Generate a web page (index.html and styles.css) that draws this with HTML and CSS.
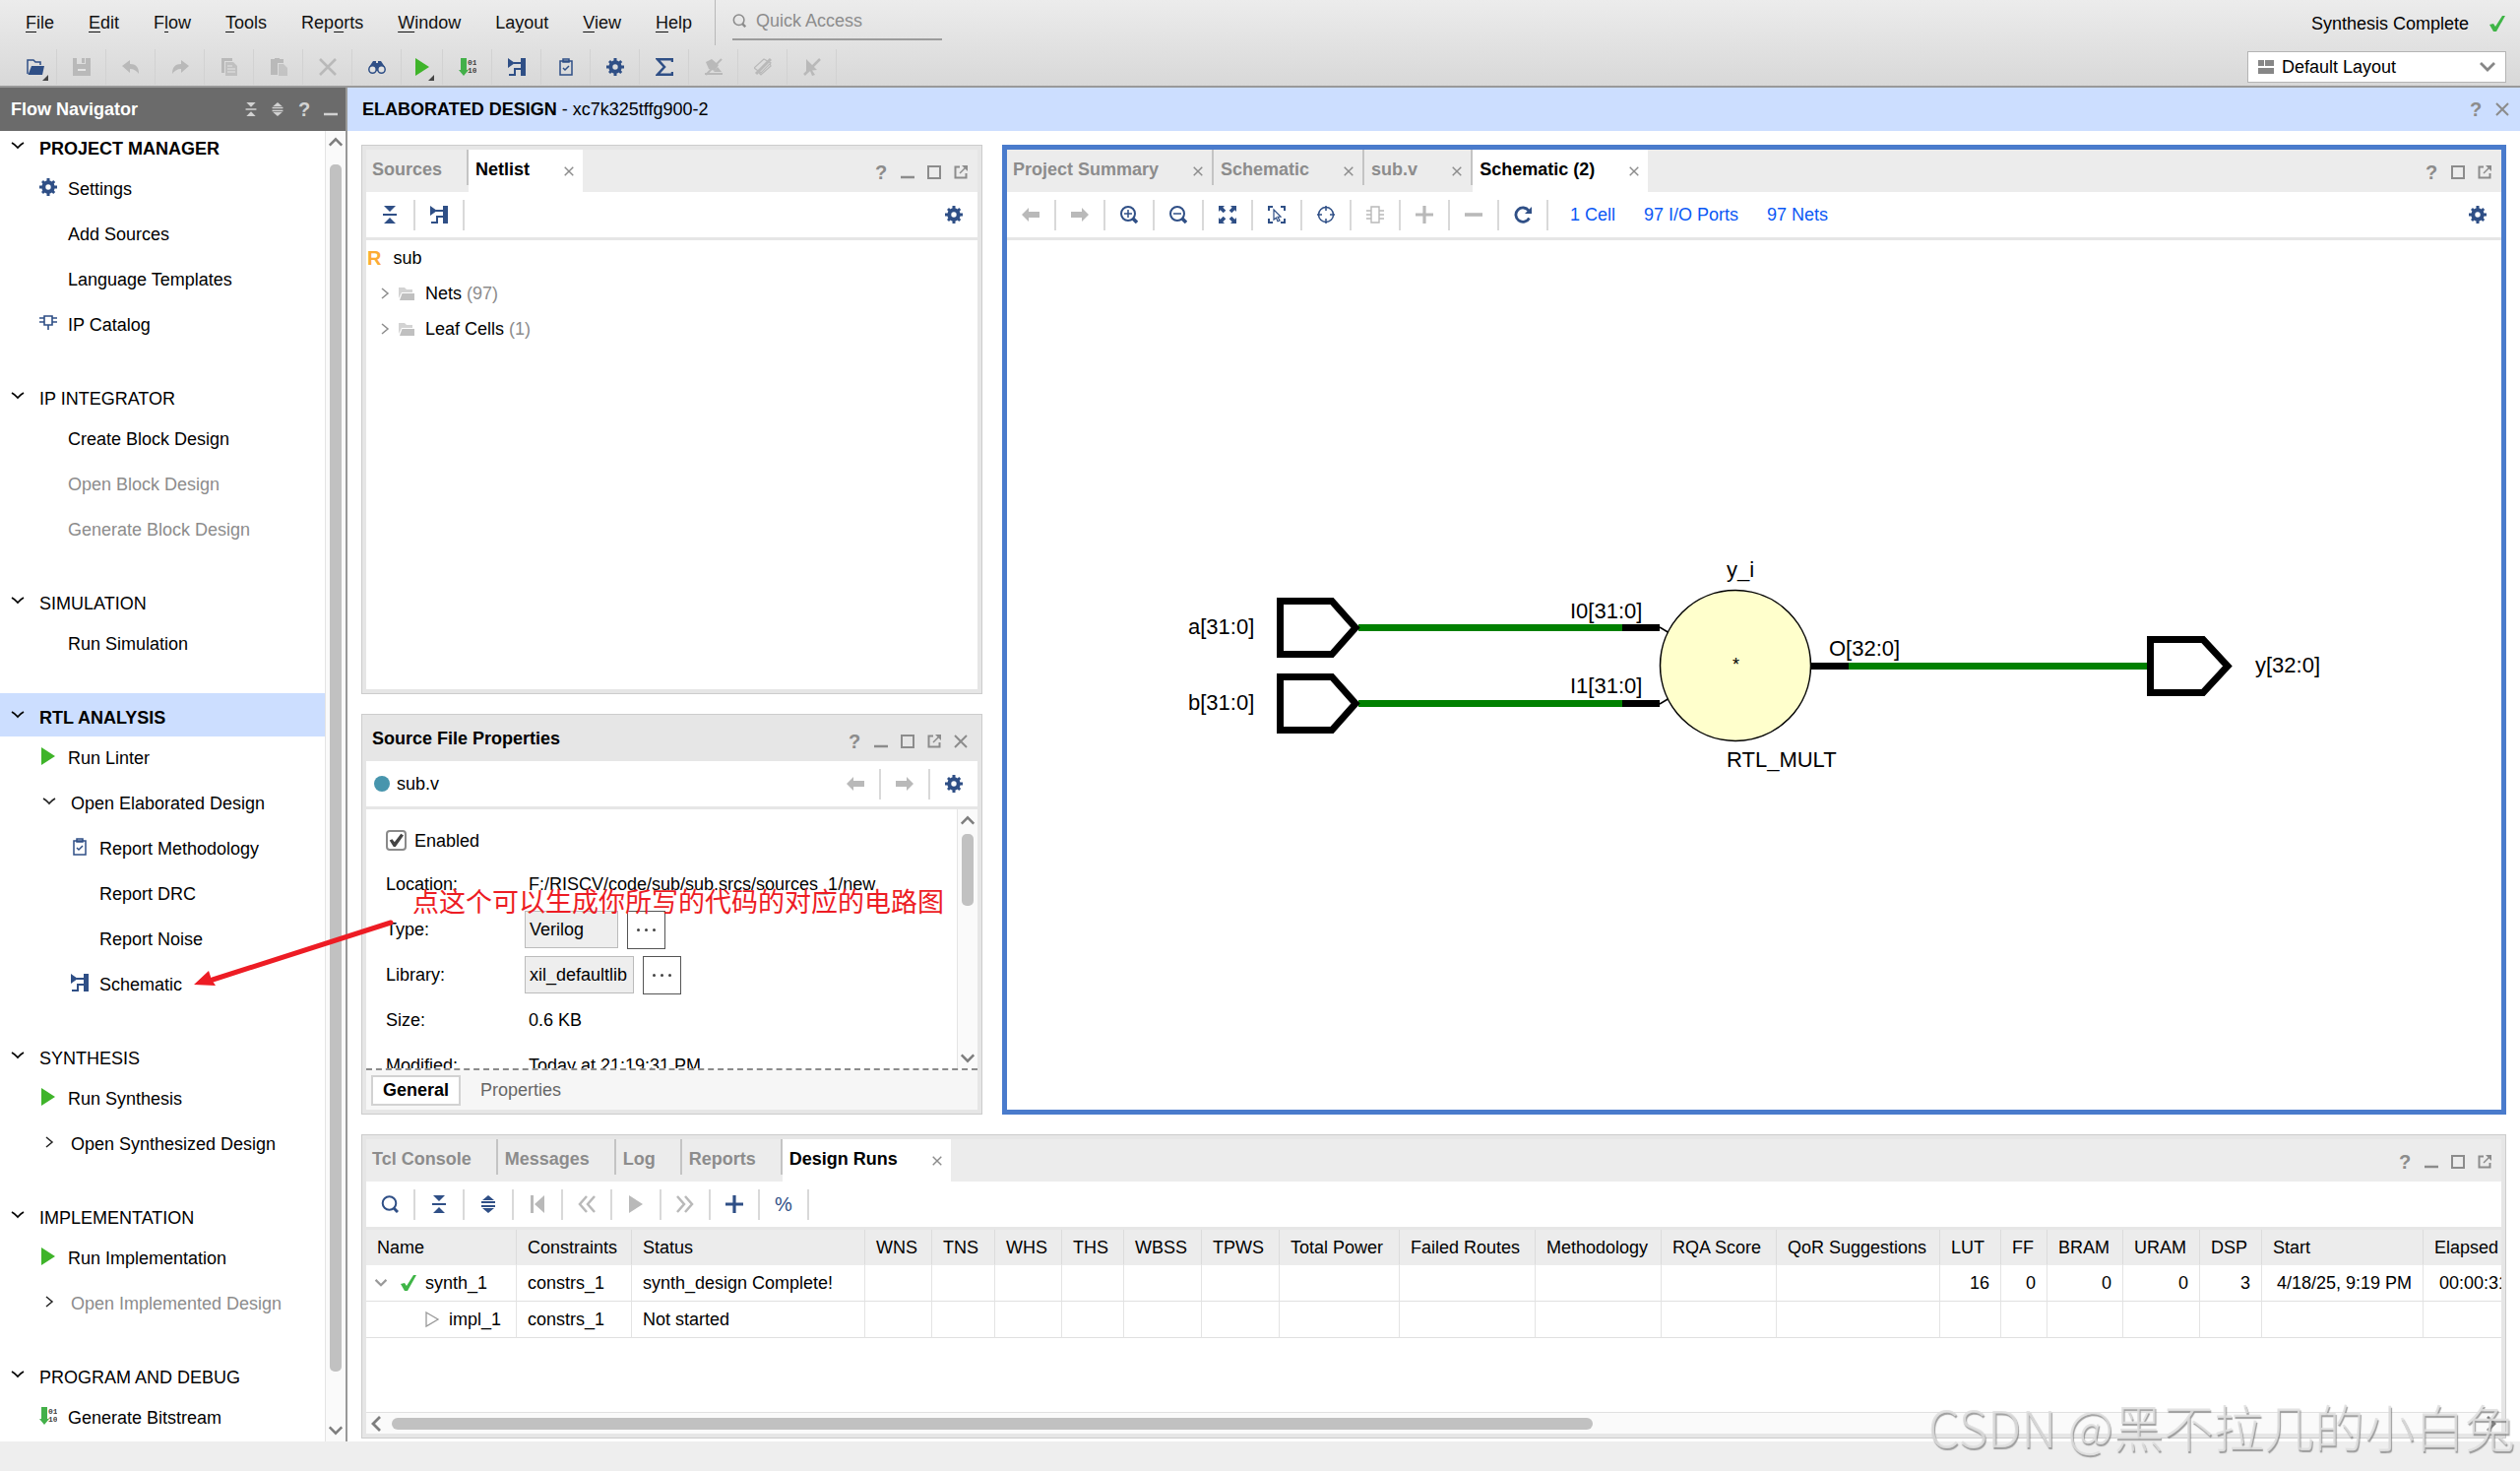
FILE: index.html
```html
<!DOCTYPE html>
<html lang="en">
<head>
<meta charset="utf-8">
<meta name="viewport" content="width=device-width, initial-scale=1">
<title>Elaborated Design</title>
<link rel="stylesheet" href="styles.css">
</head>
<body>

<svg class="sprite" aria-hidden="true">
  <symbol id="open" viewBox="0 0 18 18"><path d="M1 16V2h6l2 2h5v3" fill="none" stroke="currentColor" stroke-width="1.5"/><path d="M5 8h13l-2 9H1.500z" fill="currentColor"/></symbol>
  <symbol id="save" viewBox="0 0 18 18"><path d="M0 0h4v6h9V0h5v18H0z" fill="currentColor"/><path d="M9 0h3v5H9z" fill="currentColor"/><path d="M5 11h8v2H5z" fill="#e4e4e4"/></symbol>
  <symbol id="undo" viewBox="0 0 18 18"><path d="M0 8l8-6v4c6 0 9 3 9 10-2-3-5-5-9-5v4z" fill="currentColor"/></symbol>
  <symbol id="redo" viewBox="0 0 18 18"><path d="M18 8l-8-6v4C4 6 1 9 1 16c2-3 5-5 9-5v4z" fill="currentColor"/></symbol>
  <symbol id="copy" viewBox="0 0 18 18"><path d="M1 0h11v3H4v12H1z" fill="currentColor"/><path d="M5 4h8l4 4v10H5z" fill="currentColor" opacity=".8"/><path d="M7 8h5M7 11h8M7 14h8" stroke="#e4e4e4"/></symbol>
  <symbol id="paste" viewBox="0 0 18 18"><path d="M1 1h4V0h5v1h4v4H8v12H1z" fill="currentColor"/><path d="M9 6h5l4 4v8H9z" fill="currentColor" opacity=".7"/></symbol>
  <symbol id="delete" viewBox="0 0 18 18"><path d="M1 1l16 16M17 1L1 17" stroke="currentColor" stroke-width="2.600"/></symbol>
  <symbol id="find" viewBox="0 0 18 18"><path d="M1 9l4-6h3v2h2V3h3l4 6-4 4H5z" fill="currentColor"/><circle cx="4.500" cy="11.500" r="3.700" fill="#e2e2e2" stroke="currentColor" stroke-width="1.500"/><circle cx="13.500" cy="11.500" r="3.700" fill="#e2e2e2" stroke="currentColor" stroke-width="1.500"/></symbol>
  <symbol id="play" viewBox="0 0 18 18"><path d="M2 0l14 9-14 9z" fill="currentColor"/></symbol>
  <symbol id="run" viewBox="0 0 18 18"><path d="M2 0l14 9-14 9z" fill="currentColor"/></symbol>
  <symbol id="bits" viewBox="0 0 18 18"><path d="M2 0h6v12h2l-5 6-5-6h2z" fill="#43b049"/><text x="9" y="7" font-size="8" font-family="Liberation Mono, monospace" font-weight="700" fill="#444">01</text><text x="9" y="15" font-size="8" font-family="Liberation Mono, monospace" font-weight="700" fill="#444">10</text></symbol>
  <symbol id="schematic" viewBox="0 0 18 18"><path d="M0 0l7 5-7 5zM13 0h5v18h-5z" fill="currentColor"/><path d="M6 5h8M1 17h6v-6h7" fill="none" stroke="currentColor" stroke-width="2"/></symbol>
  <symbol id="report" viewBox="0 0 18 18"><path d="M3 3h12v14H3zM6 1h6v3H6z" fill="none" stroke="currentColor" stroke-width="1.500"/><path d="M6 10l2 2 4-4" fill="none" stroke="currentColor" stroke-width="1.500"/></symbol>
  <symbol id="gear" viewBox="0 0 18 18"><path d="M7.500 0h3v3h-3zM7.500 15h3v3h-3zM0 7.500h3v3H0zM15 7.500h3v3h-3zM2 4l2-2 2.200 2.200-2 2zM12 4.200L14.200 2l2 2L14 6.200zM2 14l2.200-2.200 2 2L4 16zM12 13.800l2-2 2.200 2.200-2 2z" fill="currentColor"/><circle cx="9" cy="9" r="4.700" fill="none" stroke="currentColor" stroke-width="4"/></symbol>
  <symbol id="sum" viewBox="0 0 18 18"><path d="M17 4V1.300H2L9 9l-7 7.700h15V14" fill="none" stroke="currentColor" stroke-width="2.500"/></symbol>
  <symbol id="mark" viewBox="0 0 18 18"><path d="M1 4l6-3 7 6-4 6-6-2zM0 15h18v2H0z" fill="currentColor"/><path d="M17 1L1 17" stroke="currentColor" stroke-width="2"/><path d="M13 9l4 5h-8z" fill="currentColor"/></symbol>
  <symbol id="nohigh" viewBox="0 0 18 18"><path d="M0 10l10-9 7 4-10 10zM5 15l2 2 10-9-1-3" fill="none" stroke="currentColor" stroke-width="1.200"/><path d="M17 1L2 16" stroke="currentColor" stroke-width="3"/></symbol>
  <symbol id="nosel" viewBox="0 0 18 18"><path d="M3 1l11 11-5 .500 3 4.500-3 1-2-5-4 3z" fill="currentColor"/><path d="M17 1L1 17" stroke="currentColor" stroke-width="2.500"/></symbol>
  <symbol id="collapse" viewBox="0 0 18 18"><path d="M3 0h12L9 6zM3 18h12l-6-6zM2 8h14v2H2z" fill="currentColor"/></symbol>
  <symbol id="expand" viewBox="0 0 18 18"><path d="M9 0l6 5H3zM9 18l6-5H3zM2 6h14v2H2zM2 10h14v2H2z" fill="currentColor"/></symbol>
  <symbol id="ip" viewBox="0 0 18 18"><path d="M5 2h8v9H5zM0 4h5M0 8h5M13 4h5M13 8h5M9 11v5" fill="none" stroke="currentColor" stroke-width="1.600"/></symbol>
  <symbol id="folder" viewBox="0 0 18 18"><path d="M1 14V3h6l2 2h6v3H4z" fill="currentColor" opacity=".7"/><path d="M4.500 9H17v7H2z" fill="currentColor"/></symbol>
  <symbol id="down" viewBox="0 0 18 18"><path d="M3 6q3 1.500 6 5 3-3.500 6-5" fill="none" stroke="currentColor" stroke-width="1.800"/></symbol>
  <symbol id="bigdown" viewBox="0 0 18 18"><path d="M2 5l7 7 7-7" fill="none" stroke="currentColor" stroke-width="2.800"/></symbol>
  <symbol id="right" viewBox="0 0 18 18"><path d="M6 4l6 5-6 5" fill="none" stroke="currentColor" stroke-width="1.500"/></symbol>
  <symbol id="arrowl" viewBox="0 0 18 18"><path d="M0 9l7-7v4h11v6H7v4z" fill="currentColor"/></symbol>
  <symbol id="arrowr" viewBox="0 0 18 18"><path d="M18 9l-7-7v4H0v6h11v4z" fill="currentColor"/></symbol>
  <symbol id="zoomin" viewBox="0 0 18 18"><circle cx="8" cy="8" r="7" fill="none" stroke="currentColor" stroke-width="2"/><path d="M8 4v8M4 8h8" stroke="currentColor" stroke-width="1.500"/><path d="M13 13l4 4" stroke="currentColor" stroke-width="3.500"/></symbol>
  <symbol id="zoomout" viewBox="0 0 18 18"><circle cx="8" cy="8" r="7" fill="none" stroke="currentColor" stroke-width="2"/><path d="M4 8h8" stroke="currentColor" stroke-width="1.500"/><path d="M13 13l4 4" stroke="currentColor" stroke-width="3.500"/></symbol>
  <symbol id="search" viewBox="0 0 18 18"><circle cx="8.500" cy="8" r="6.800" fill="none" stroke="currentColor" stroke-width="2"/><path d="M13 13l4 4" stroke="currentColor" stroke-width="3"/></symbol>
  <symbol id="fit" viewBox="0 0 18 18"><path d="M0 0h6L4.300 1.700l3 3-2.600 2.600-3-3L0 6zM18 0v6l-1.700-1.700-3 3-2.600-2.600 3-3L12 0zM0 18v-6l1.700 1.700 3-3 2.600 2.600-3 3L6 18zM18 18h-6l1.700-1.700-3-3 2.600-2.600 3 3L18 12z" fill="currentColor"/></symbol>
  <symbol id="selarea" viewBox="0 0 18 18"><path d="M1 5V1h4M13 1h4v4M17 13v4h-4M5 17H1v-4" fill="none" stroke="currentColor" stroke-width="2"/><path d="M6 4l7 7-3 .300 2 3.700-2 .700-1.500-3.500L6 14z" fill="none" stroke="currentColor" stroke-width="1.200"/></symbol>
  <symbol id="target" viewBox="0 0 18 18"><circle cx="9" cy="9" r="7.500" fill="none" stroke="currentColor" stroke-width="1.500"/><path d="M9 0v5M9 13v5M0 9h5M13 9h5" stroke="currentColor" stroke-width="1.500"/></symbol>
  <symbol id="cell" viewBox="0 0 18 18"><path d="M5 1h8v16H5zM0 5h5M0 9h5M0 13h5M13 5h5M13 9h5M13 13h5" fill="none" stroke="currentColor" stroke-width="1.400"/></symbol>
  <symbol id="plus" viewBox="0 0 18 18"><path d="M9 0v18M0 9h18" stroke="currentColor" stroke-width="3.200"/></symbol>
  <symbol id="minus" viewBox="0 0 18 18"><path d="M0 9h18" stroke="currentColor" stroke-width="3.600"/></symbol>
  <symbol id="reload" viewBox="0 0 18 18"><path d="M15 5A7.200 7.200 0 1 0 15.500 12.500" fill="none" stroke="currentColor" stroke-width="2.800"/><path d="M18 1v7h-7z" fill="currentColor"/></symbol>
  <symbol id="first" viewBox="0 0 18 18"><path d="M2 0h3v18H2zM16 0v18L6 9z" fill="currentColor"/></symbol>
  <symbol id="rewind" viewBox="0 0 18 18"><path d="M9 1L2 9l7 8M17 1l-7 8 7 8" fill="none" stroke="currentColor" stroke-width="2.500"/></symbol>
  <symbol id="forward" viewBox="0 0 18 18"><path d="M1 1l7 8-7 8M9 1l7 8-7 8" fill="none" stroke="currentColor" stroke-width="2.500"/></symbol>
  <symbol id="check" viewBox="0 0 18 18"><path d="M1 10l4-1 2 3 7-11h3L8 17H5z" fill="#3fb547"/></symbol>
  <symbol id="tri" viewBox="0 0 18 18"><path d="M3 2l12 7-12 7z" fill="none" stroke="currentColor" stroke-width="1.300"/></symbol>
  <symbol id="layout" viewBox="0 0 18 18"><path d="M1 2h6v6H1zM8 2h9v6H8zM1 10h16v6H1z" fill="currentColor"/></symbol>
  <symbol id="min" viewBox="0 0 14 14"><path d="M0 12h14" stroke="currentColor" stroke-width="2.500"/></symbol>
  <symbol id="max" viewBox="0 0 14 14"><path d="M1 1h12v12H1z" fill="none" stroke="currentColor" stroke-width="2"/></symbol>
  <symbol id="float" viewBox="0 0 14 14"><path d="M6 1.500H1.500v11h11V8" fill="none" stroke="currentColor" stroke-width="2"/><path d="M6 8l6-6" stroke="currentColor" stroke-width="1.500"/><path d="M8 0h6v6z" fill="currentColor"/></symbol>
  <symbol id="close" viewBox="0 0 14 14"><path d="M1 1l12 12M13 1L1 13" stroke="currentColor" stroke-width="2"/></symbol>
</svg>

<div class="app">
  <header class="topbar">
    <div class="top-left">
      <div class="menu-row">
        <nav class="menu">
          <button><u>F</u>ile</button><button><u>E</u>dit</button><button>F<u>l</u>ow</button><button><u>T</u>ools</button><button>Rep<u>o</u>rts</button><button><u>W</u>indow</button><button>La<u>y</u>out</button><button><u>V</u>iew</button><button><u>H</u>elp</button>
        </nav>
        <label class="quick"><svg class="i14"><use href="#search"/></svg><input type="text" placeholder="Quick Access" aria-label="Quick Access"></label>
      </div>
      <div class="main-tools">
        <button class="mt has-more" aria-label="Open"><svg class="i18"><use href="#open"/></svg></button>
        <button class="mt off" aria-label="Save"><svg class="i18"><use href="#save"/></svg></button>
        <button class="mt off" aria-label="Undo"><svg class="i18"><use href="#undo"/></svg></button>
        <button class="mt off" aria-label="Redo"><svg class="i18"><use href="#redo"/></svg></button>
        <button class="mt off" aria-label="Copy"><svg class="i18"><use href="#copy"/></svg></button>
        <button class="mt off" aria-label="Paste"><svg class="i18"><use href="#paste"/></svg></button>
        <button class="mt off" aria-label="Delete"><svg class="i18"><use href="#delete"/></svg></button>
        <button class="mt" aria-label="Find"><svg class="i18"><use href="#find"/></svg></button>
        <button class="mt narrow green has-more" aria-label="Run"><svg class="i18"><use href="#play"/></svg></button>
        <button class="mt" aria-label="Generate Bitstream"><svg class="i18"><use href="#bits"/></svg></button>
        <button class="mt" aria-label="Schematic"><svg class="i18"><use href="#schematic"/></svg></button>
        <button class="mt" aria-label="Report"><svg class="i18"><use href="#report"/></svg></button>
        <button class="mt" aria-label="Settings"><svg class="i18"><use href="#gear"/></svg></button>
        <button class="mt" aria-label="Sum"><svg class="i18"><use href="#sum"/></svg></button>
        <button class="mt off" aria-label="Unmark"><svg class="i18"><use href="#mark"/></svg></button>
        <button class="mt off" aria-label="Unhighlight"><svg class="i18"><use href="#nohigh"/></svg></button>
        <button class="mt off" aria-label="Unselect"><svg class="i18"><use href="#nosel"/></svg></button>
      </div>
    </div>
    <div class="top-right">
      <div class="status">Synthesis Complete <svg class="i18"><use href="#check"/></svg></div>
      <label class="layout-pick"><svg class="i18"><use href="#layout"/></svg><select aria-label="Layout"><option>Default Layout</option></select><svg class="i18"><use href="#bigdown"/></svg></label>
    </div>
  </header>

  <div class="body">
    <aside class="nav">
      <div class="nav-head"><h2>Flow Navigator</h2>
        <button aria-label="Collapse all"><svg class="i14"><use href="#collapse"/></svg></button><button aria-label="Expand all"><svg class="i14"><use href="#expand"/></svg></button><button class="help">?</button><button aria-label="Minimize"><svg class="i14"><use href="#min"/></svg></button>
      </div>
      <div class="nav-body">
        <div class="nav-list">
          <section>
            <button class="sec first strong"><svg class="i18"><use href="#down"/></svg>PROJECT MANAGER</button>
            <button class="item"><svg class="i18"><use href="#gear"/></svg>Settings</button>
            <button class="item noicon">Add Sources</button>
            <button class="item noicon">Language Templates</button>
            <button class="item"><svg class="i18"><use href="#ip"/></svg>IP Catalog</button>
          </section>
          <section>
            <button class="sec"><svg class="i18"><use href="#down"/></svg>IP INTEGRATOR</button>
            <button class="item noicon">Create Block Design</button>
            <button class="item noicon dim">Open Block Design</button>
            <button class="item noicon dim">Generate Block Design</button>
          </section>
          <section>
            <button class="sec"><svg class="i18"><use href="#down"/></svg>SIMULATION</button>
            <button class="item noicon">Run Simulation</button>
          </section>
          <section>
            <button class="sec strong current"><svg class="i18"><use href="#down"/></svg>RTL ANALYSIS</button>
            <button class="item"><svg class="i18 green"><use href="#run"/></svg>Run Linter</button>
            <button class="item tree"><svg class="i18"><use href="#down"/></svg>Open Elaborated Design</button>
            <button class="item sub"><svg class="i18"><use href="#report"/></svg>Report Methodology</button>
            <button class="item sub noicon">Report DRC</button>
            <button class="item sub noicon">Report Noise</button>
            <button class="item sub"><svg class="i18"><use href="#schematic"/></svg>Schematic</button>
          </section>
          <section>
            <button class="sec"><svg class="i18"><use href="#down"/></svg>SYNTHESIS</button>
            <button class="item"><svg class="i18 green"><use href="#run"/></svg>Run Synthesis</button>
            <button class="item tree"><svg class="i18"><use href="#right"/></svg>Open Synthesized Design</button>
          </section>
          <section>
            <button class="sec"><svg class="i18"><use href="#down"/></svg>IMPLEMENTATION</button>
            <button class="item"><svg class="i18 green"><use href="#run"/></svg>Run Implementation</button>
            <button class="item tree dim"><svg class="i18"><use href="#right"/></svg>Open Implemented Design</button>
          </section>
          <section>
            <button class="sec"><svg class="i18"><use href="#down"/></svg>PROGRAM AND DEBUG</button>
            <button class="item"><svg class="i18"><use href="#bits"/></svg>Generate Bitstream</button>
          </section>
        </div>
        <div class="vbar"><svg class="i18 flip"><use href="#bigdown"/></svg><div class="vtrack"><div class="vthumb nav-thumb"></div></div><svg class="i18"><use href="#bigdown"/></svg></div>
      </div>
    </aside>

    <main class="main">
      <div class="title"><h1>ELABORATED DESIGN <span>- xc7k325tffg900-2</span></h1><button class="help">?</button><button aria-label="Close"><svg class="i14"><use href="#close"/></svg></button></div>

      <div class="work">
        <div class="upper">
          <div class="left">
            <section class="panel netlist">
              <div class="tabbar">
                <button class="tab">Sources</button>
                <button class="tab active">Netlist<svg class="x"><use href="#close"/></svg></button>
                <div class="win"><button class="help">?</button><button aria-label="Minimize"><svg class="i14"><use href="#min"/></svg></button><button aria-label="Maximize"><svg class="i14"><use href="#max"/></svg></button><button aria-label="Float"><svg class="i14"><use href="#float"/></svg></button></div>
              </div>
              <div class="tools"><button class="t" aria-label="Collapse all"><svg class="i18"><use href="#collapse"/></svg></button><button class="t" aria-label="Schematic"><svg class="i18"><use href="#schematic"/></svg></button><button class="t end" aria-label="Settings"><svg class="i18"><use href="#gear"/></svg></button></div>
              <ul class="netlist-tree">
                <li class="root"><b>R</b>sub</li>
                <li><svg class="i18"><use href="#right"/></svg><svg class="i18 fold"><use href="#folder"/></svg>Nets <span>(97)</span></li>
                <li><svg class="i18"><use href="#right"/></svg><svg class="i18 fold"><use href="#folder"/></svg>Leaf Cells <span>(1)</span></li>
              </ul>
            </section>

            <section class="panel props">
              <div class="prop-head"><h2>Source File Properties</h2>
                <div class="win"><button class="help">?</button><button aria-label="Minimize"><svg class="i14"><use href="#min"/></svg></button><button aria-label="Maximize"><svg class="i14"><use href="#max"/></svg></button><button aria-label="Float"><svg class="i14"><use href="#float"/></svg></button><button aria-label="Close"><svg class="i14"><use href="#close"/></svg></button></div>
              </div>
              <div class="tools file"><span class="dot"></span><span class="name">sub.v</span><button class="t off" aria-label="Back"><svg class="i18"><use href="#arrowl"/></svg></button><button class="t off" aria-label="Forward"><svg class="i18"><use href="#arrowr"/></svg></button><button class="t end" aria-label="Settings"><svg class="i18"><use href="#gear"/></svg></button></div>
              <div class="prop-body">
                <form class="form">
                  <label class="enabled"><input type="checkbox" checked>Enabled</label>
                  <dl>
                    <dt>Location:</dt><dd>F:/RISCV/code/sub/sub.srcs/sources_1/new</dd>
                    <dt>Type:</dt><dd><span class="value type">Verilog</span><button type="button" class="more" aria-label="Change type"><i></i><i></i><i></i></button></dd>
                    <dt>Library:</dt><dd><span class="value">xil_defaultlib</span><button type="button" class="more" aria-label="Change library"><i></i><i></i><i></i></button></dd>
                    <dt>Size:</dt><dd>0.6 KB</dd>
                    <dt>Modified:</dt><dd>Today at 21:19:31 PM</dd>
                  </dl>
                </form>
                <div class="vbar"><svg class="i18 flip"><use href="#bigdown"/></svg><div class="vtrack"><div class="vthumb prop-thumb"></div></div><svg class="i18"><use href="#bigdown"/></svg></div>
              </div>
              <div class="prop-tabs"><button class="active">General</button><button>Properties</button></div>
            </section>
          </div>

          <section class="panel focus">
            <div class="tabbar">
              <button class="tab closable">Project Summary<svg class="x"><use href="#close"/></svg></button>
              <button class="tab closable">Schematic<svg class="x"><use href="#close"/></svg></button>
              <button class="tab closable">sub.v<svg class="x"><use href="#close"/></svg></button>
              <button class="tab active">Schematic (2)<svg class="x"><use href="#close"/></svg></button>
              <div class="win"><button class="help">?</button><button aria-label="Maximize"><svg class="i14"><use href="#max"/></svg></button><button aria-label="Float"><svg class="i14"><use href="#float"/></svg></button></div>
            </div>
            <div class="tools">
              <button class="t off" aria-label="Back"><svg class="i18"><use href="#arrowl"/></svg></button>
              <button class="t off" aria-label="Forward"><svg class="i18"><use href="#arrowr"/></svg></button>
              <button class="t" aria-label="Zoom in"><svg class="i18"><use href="#zoomin"/></svg></button>
              <button class="t" aria-label="Zoom out"><svg class="i18"><use href="#zoomout"/></svg></button>
              <button class="t" aria-label="Zoom fit"><svg class="i18"><use href="#fit"/></svg></button>
              <button class="t" aria-label="Select area"><svg class="i18"><use href="#selarea"/></svg></button>
              <button class="t" aria-label="Autofit selection"><svg class="i18"><use href="#target"/></svg></button>
              <button class="t off" aria-label="Cell"><svg class="i18"><use href="#cell"/></svg></button>
              <button class="t off" aria-label="Add"><svg class="i18"><use href="#plus"/></svg></button>
              <button class="t off" aria-label="Remove"><svg class="i18"><use href="#minus"/></svg></button>
              <button class="t" aria-label="Regenerate"><svg class="i18"><use href="#reload"/></svg></button>
              <div class="links"><a href="#cell">1 Cell</a><a href="#ports">97 I/O Ports</a><a href="#nets">97 Nets</a></div>
              <button class="t end" aria-label="Settings"><svg class="i18"><use href="#gear"/></svg></button>
            </div>
            <div class="canvas">
              <svg class="diagram" viewBox="1182 556 1200 240" role="img" aria-label="Schematic of sub">
                <g fill="none" stroke="#008000" stroke-width="7"><path d="M1380 637.500h268M1380 714.500h268M1878 676.500h306"/></g>
                <g fill="none" stroke="#000" stroke-width="7"><path d="M1648 637.500h38M1648 714.500h38M1840 676.500h38"/>
                  <path d="M1300.500 610.500H1353L1377 637.500 1353 664.500H1300.500z"/>
                  <path d="M1300.500 687.500H1353L1377 714.500 1353 741.500H1300.500z"/>
                  <path d="M2184.500 649.500H2238L2263 676.500 2238 703.500H2184.500z"/></g>
                <path d="M1686 637l10 6M1686 715l10-6" stroke="#000" stroke-width="1.500"/>
                <circle cx="1763" cy="676" r="76.500" fill="#ffffcc" stroke="#000" stroke-width="1.500"/>
                <g class="net-labels">
                  <text x="1207" y="644">a[31:0]</text><text x="1207" y="721">b[31:0]</text>
                  <text x="1595" y="628">I0[31:0]</text><text x="1595" y="704">I1[31:0]</text>
                  <text x="1754" y="586">y_i</text><text x="1754" y="779">RTL_MULT</text>
                  <text x="1858" y="666">O[32:0]</text><text x="2291" y="683">y[32:0]</text>
                  <text class="op" x="1760" y="681">*</text>
                </g>
              </svg>
            </div>
          </section>
        </div>

        <section class="panel runs">
          <div class="tabbar">
            <button class="tab">Tcl Console</button><button class="tab">Messages</button><button class="tab">Log</button><button class="tab">Reports</button>
            <button class="tab active">Design Runs<svg class="x"><use href="#close"/></svg></button>
            <div class="win"><button class="help">?</button><button aria-label="Minimize"><svg class="i14"><use href="#min"/></svg></button><button aria-label="Maximize"><svg class="i14"><use href="#max"/></svg></button><button aria-label="Float"><svg class="i14"><use href="#float"/></svg></button></div>
          </div>
          <div class="tools">
            <button class="t" aria-label="Search"><svg class="i18"><use href="#search"/></svg></button>
            <button class="t" aria-label="Collapse all"><svg class="i18"><use href="#collapse"/></svg></button>
            <button class="t" aria-label="Expand all"><svg class="i18"><use href="#expand"/></svg></button>
            <button class="t off" aria-label="First"><svg class="i18"><use href="#first"/></svg></button>
            <button class="t off" aria-label="Previous"><svg class="i18"><use href="#rewind"/></svg></button>
            <button class="t off" aria-label="Launch"><svg class="i18"><use href="#play"/></svg></button>
            <button class="t off" aria-label="Next"><svg class="i18"><use href="#forward"/></svg></button>
            <button class="t" aria-label="Create run"><svg class="i18"><use href="#plus"/></svg></button>
            <button class="t pct">%</button>
          </div>
          <div class="table-wrap">
            <table>
              <colgroup><col style="width:153px"><col style="width:117px"><col style="width:237px"><col style="width:68px"><col style="width:64px"><col style="width:68px"><col style="width:63px"><col style="width:79px"><col style="width:79px"><col style="width:122px"><col style="width:138px"><col style="width:128px"><col style="width:117px"><col style="width:166px"><col style="width:62px"><col style="width:47px"><col style="width:77px"><col style="width:78px"><col style="width:63px"><col style="width:164px"><col style="width:98px"></colgroup>
              <thead><tr><th>Name</th><th>Constraints</th><th>Status</th><th>WNS</th><th>TNS</th><th>WHS</th><th>THS</th><th>WBSS</th><th>TPWS</th><th>Total Power</th><th>Failed Routes</th><th>Methodology</th><th>RQA Score</th><th>QoR Suggestions</th><th>LUT</th><th>FF</th><th>BRAM</th><th>URAM</th><th>DSP</th><th>Start</th><th>Elapsed</th></tr></thead>
              <tbody>
                <tr><td class="run"><div><svg class="i14"><use href="#bigdown"/></svg><svg class="i18"><use href="#check"/></svg>synth_1</div></td><td>constrs_1</td><td>synth_design Complete!</td><td></td><td></td><td></td><td></td><td></td><td></td><td></td><td></td><td></td><td></td><td></td><td class="num">16</td><td class="num">0</td><td class="num">0</td><td class="num">0</td><td class="num">3</td><td class="num">4/18/25, 9:19 PM</td><td class="num">00:00:31</td></tr>
                <tr><td class="run child"><div><svg class="i18"><use href="#tri"/></svg>impl_1</div></td><td>constrs_1</td><td>Not started</td><td></td><td></td><td></td><td></td><td></td><td></td><td></td><td></td><td></td><td></td><td></td><td></td><td></td><td></td><td></td><td></td><td></td><td></td></tr>
              </tbody>
            </table>
          </div>
          <div class="hbar"><svg class="i18 turn-left"><use href="#bigdown"/></svg><div class="htrack"><div class="hthumb"></div></div><svg class="i18 turn-right"><use href="#bigdown"/></svg></div>
        </section>
      </div>
    </main>
  </div>
  <footer class="foot"></footer>

  <svg class="note-arrow" viewBox="0 0 210 80" aria-hidden="true"><path d="M203 14L22 72" stroke="#ed1c24" stroke-width="5" stroke-linecap="round"/><path d="M3 77L18 63l3 9 4 6z" fill="#ed1c24"/></svg>
  <p class="note" lang="zh">点这个可以生成你所写的代码的对应的电路图</p>
  <p class="watermark" lang="zh">CSDN @黑不拉几的小白兔</p>
</div>
</body>
</html>
```
FILE: styles.css
```css
* { box-sizing: border-box; }

:root {
  --blue: #2f4f86;
  --grey: #8c8c8c;
  --off: #b9b9b9;
  --line: #e6e6e6;
  --sel: #ccdeff;
}

body {
  margin: 0;
  background: #fff;
  color: #000;
  font: 18px/22px "Liberation Sans", "Noto Sans CJK SC", sans-serif;
}

h1, h2, p, ul, dl, dd { margin: 0; padding: 0; font-size: 18px; line-height: 22px; }
ul { list-style: none; }
svg { display: block; flex: none; }
.sprite { position: absolute; width: 0; height: 0; }
.i18 { width: 18px; height: 18px; }
.i14 { width: 14px; height: 14px; }
.green { color: #3fb42a; }

button {
  display: flex;
  align-items: center;
  margin: 0;
  padding: 0;
  border: 0;
  border-radius: 0;
  background: none;
  color: inherit;
  font: inherit;
  white-space: nowrap;
  flex: none;
}

.help { width: 14px; justify-content: center; font-weight: 700; font-size: 20px; }

.app {
  position: relative;
  display: flex;
  flex-direction: column;
  height: 100vh;
  overflow: hidden;
}

/* Menu and main toolbar */
.topbar {
  display: flex;
  justify-content: space-between;
  background: linear-gradient(#ececec, #d8d8d8);
  border-bottom: 2px solid #999;
}
.menu-row { display: flex; height: 48px; }
.menu { display: flex; gap: 35px; padding: 0 23px 0 26px; border-right: 1px solid #b8b8b8; margin-bottom: 2px; color: #111; }
.menu button { display: block; }
.menu u { text-underline-offset: 3px; }
.quick {
  display: flex;
  align-items: center;
  gap: 10px;
  width: 213px;
  height: 35px;
  margin: 6px 0 0 17px;
  padding-bottom: 3px;
  border-bottom: 2px solid #9c9c9c;
  color: var(--grey);
}
.quick input { width: 170px; border: 0; padding: 0; background: none; font: inherit; }
.quick input::placeholder { color: var(--grey); opacity: 1; }
.main-tools { display: flex; height: 39px; padding-left: 14px; }
.mt { position: relative; width: 50px; height: 36px; margin-top: 2px; justify-content: center; color: var(--blue); border-right: 1px solid #d2d2d2; }
.mt:first-child { width: 44px; }
.mt.off { color: var(--off); }
.mt.narrow { width: 42px; }
.mt.green { color: #3fb42a; }
.has-more::after {
  content: "";
  position: absolute;
  right: 8px;
  bottom: 4px;
  border-left: 6px solid transparent;
  border-bottom: 6px solid #444;
}
.top-right { display: flex; flex-direction: column; align-items: flex-end; padding-right: 14px; }
.status { display: flex; align-items: center; gap: 20px; height: 48px; }
.layout-pick {
  display: flex;
  align-items: center;
  gap: 7px;
  width: 263px;
  height: 32px;
  margin-top: 4px;
  padding: 0 9px;
  background: #fff;
  border: 1px solid #b4b4b4;
  color: #868686;
}
.layout-pick select { flex: 1; appearance: none; border: 0; padding: 0; background: none; color: #000; font: inherit; }

.body { display: flex; flex: 1; min-height: 0; }

/* Flow navigator */
.nav { display: flex; flex-direction: column; width: 353px; border-right: 2px solid #999; }
.nav-head { display: flex; align-items: center; gap: 13px; height: 44px; padding: 0 8px 0 11px; background: #6b6b6b; color: #d2d2d2; }
.nav-head h2 { flex: 1; color: #fff; }
.nav-body { display: flex; flex: 1; min-height: 0; }
.nav-list { flex: 1; overflow: hidden; }
.nav-list section { padding-bottom: 26px; }
.nav-list section:last-child { padding-bottom: 0; }
.sec { width: 100%; height: 44px; padding: 5px 0 0 9px; gap: 13px; }
.sec .i18 { margin-top: -6px; }
.sec.first { height: 37px; padding: 0 0 2px 9px; }
.strong { font-weight: 700; }
.current { background: var(--sel); }
.item { width: 100%; height: 46px; padding: 0 0 3px 40px; gap: 11px; }
.item .i18 { color: var(--blue); margin-top: -4px; }
.item .green { color: #3fb42a; }
.noicon { padding-left: 69px; }
.tree { padding-left: 41px; gap: 13px; }
.tree .i18 { color: #222; }
.sub { padding-left: 72px; gap: 11px; }
.sub.noicon { padding-left: 101px; }
.dim { color: var(--grey); }

.vbar { display: flex; flex-direction: column; align-items: center; width: 21px; padding: 2px 0; background: #fafafa; border-left: 1px solid #e4e4e4; color: #7d7d7d; }
.vtrack { flex: 1; width: 100%; padding: 5px 4px 0; }
.vthumb { border-radius: 5px; background: #c1c1c1; }
.vbar .i18 { width: 16px; }
.flip { transform: scaleY(-1); }
.nav-body .vtrack { padding-top: 14px; }
.nav-thumb { height: 96%; }

/* Workspace */
.main { display: flex; flex: 1; flex-direction: column; min-width: 0; }
.title { display: flex; align-items: center; gap: 13px; height: 44px; padding: 0 11px 0 15px; background: var(--sel); color: var(--grey); }
.title h1 { flex: 1; color: #000; }
.title span { font-weight: 400; }
.work { display: flex; flex: 1; flex-direction: column; gap: 20px; min-height: 0; padding: 14px 14px 3px; }
.upper { display: flex; flex: 1; gap: 20px; min-height: 0; }
.left { display: flex; flex-direction: column; gap: 20px; width: 631px; }
.panel { display: flex; flex-direction: column; min-width: 0; border: 1px solid #ccc; background: #fff; outline: 4px solid var(--line); outline-offset: -5px; padding: 4px; }
.focus { flex: 1; border: 5px solid #4a7bcc; padding: 0; outline: 0; }
.netlist { flex: 1; }

.tabbar { display: flex; align-items: flex-start; height: 43px; background: #ececec; flex: none; }
.tab { height: 36px; padding: 4px 25px 0 7px; border-right: 2px solid #c4c4c4; color: var(--grey); font-weight: 700; }
.tab.active { height: 43px; padding: 0 9px 3px 7px; border: 0; background: #fff; color: #000; }
.tab:first-child { padding-left: 6px; }
.tab.closable { padding-right: 9px; }
.x { width: 10px; height: 10px; margin: 4px 0 0 35px; color: var(--grey); }
.win { display: flex; align-items: center; gap: 13px; height: 46px; margin-left: auto; padding-right: 10px; color: var(--grey); }

.tools { display: flex; align-items: center; height: 49px; border-bottom: 3px solid var(--line); color: var(--blue); flex: none; }
.t { width: 50px; height: 31px; justify-content: center; border-right: 2px solid #d9d9d9; }
.t.off { color: var(--off); }
.t.end { width: 48px; margin-left: auto; border: 0; }
.pct { font-size: 20px; }
.links { display: flex; gap: 29px; padding-left: 22px; }
.links a { color: #0a58f5; text-decoration: none; }

.netlist-tree li { display: flex; align-items: center; height: 36px; padding-left: 10px; }
.netlist-tree .root { gap: 12px; padding-left: 1px; }
.netlist-tree b { color: #fcab35; font-size: 20px; }
.netlist-tree svg { color: var(--grey); }
.netlist-tree .fold { margin: 0 10px 0 4px; color: #c0c0c0; }
.netlist-tree span { padding-left: 5px; color: var(--grey); }

/* Source file properties */
.prop-head { display: flex; height: 43px; padding-left: 6px; background: var(--line); flex: none; }
.prop-head h2 { padding-top: 9px; }
.file { color: #000; }
.file .name { flex: 1; }
.file .t { color: var(--blue); }
.file .off { color: var(--off); }
.dot { width: 16px; height: 16px; margin: 0 7px 0 8px; border-radius: 50%; background: #4795ad; }
.prop-body { display: flex; height: 265px; border-bottom: 2px dashed #8c8c8c; }
.form { flex: 1; padding: 10px 0 0 20px; overflow: hidden; }
.enabled { display: flex; align-items: center; gap: 8px; height: 43px; }
.enabled input { appearance: none; width: 21px; height: 21px; margin: 0; border: 2px solid #8a8a8a; border-radius: 4px; background: #fff; }
.enabled input:checked::before { content: ""; display: block; width: 17px; height: 17px; background: #444; clip-path: polygon(10% 50%, 26% 42%, 40% 60%, 78% 10%, 94% 20%, 46% 88%, 34% 88%); }
.form dl { display: grid; grid-template-columns: 145px 1fr; grid-auto-rows: 46px; align-items: center; }
.form dd { display: flex; align-items: center; white-space: nowrap; }
.value { height: 38px; margin-left: -4px; padding: 7px 6px 0 4px; background: #eee; border: 1px solid #bbb; }
.type { width: 95px; }
.more { width: 39px; height: 39px; margin-left: 9px; justify-content: center; gap: 5px; border: 1px solid #555; background: #fff; }
.more i { width: 3px; height: 3px; border-radius: 50%; background: #444; }
.prop-thumb { height: 73px; }
.prop-body .vbar { padding-bottom: 1px; }
.prop-tabs { display: flex; align-items: center; gap: 20px; height: 40px; padding: 0 5px; background: #f6f6f6; color: #666; }
.prop-tabs .active { height: 31px; padding: 0 10px; border: 2px solid #d2d2d2; background: #fff; color: #000; font-weight: 700; }

/* Schematic */
.canvas { display: flex; flex: 1; align-items: center; justify-content: center; padding-bottom: 20px; min-height: 0; }
.diagram { width: 1200px; height: 240px; }
.net-labels { font-size: 22px; }
.net-labels .op { font-size: 18px; }

/* Design runs */
.table-wrap { height: 186px; overflow: hidden; border-bottom: 1px solid #e0e0e0; }
table { table-layout: fixed; border-collapse: separate; border-spacing: 0; width: 2186px; }
th, td { height: 37px; padding: 0 0 0 11px; border-right: 1px solid #e4e4e4; border-bottom: 1px solid #e0e0e0; text-align: left; font-weight: 400; white-space: nowrap; }
th { height: 36px; background: #ececec; border-right-color: #dcdcdc; border-bottom-color: #ececec; }
.num { padding: 0 11px 0 0; text-align: right; }
.run { padding-left: 8px; }
.run div { display: flex; align-items: center; gap: 8px; color: #000; }
.run .i14 { color: #999; margin-right: 4px; }
.child { padding-left: 58px; }
.child .i18 { color: #999; }
.hbar { display: flex; align-items: center; height: 21px; padding: 0 1px; background: #fafafa; color: #7d7d7d; }
.htrack { flex: 1; padding: 0 7px; }
.hthumb { width: 58%; max-width: 1220px; height: 12px; border-radius: 6px; background: #c1c1c1; }
.turn-left { transform: rotate(90deg); }
.turn-right { transform: rotate(-90deg); }

.foot { height: 30px; background: #eee; flex: none; }

/* Annotations lying over the window */
.note { position: absolute; left: 419px; top: 897px; color: #ed1c24; font-size: 27px; line-height: 40px; white-space: nowrap; }
.note-arrow { position: absolute; left: 194px; top: 923px; width: 210px; height: 80px; }
.watermark { position: absolute; right: 5px; bottom: 11px; color: rgba(222, 222, 222, .85); font: 51px/70px "Noto Sans CJK SC", sans-serif; font-weight: 300; white-space: nowrap; text-shadow: 1px 2px 1px rgba(120, 120, 120, .7); }
```
